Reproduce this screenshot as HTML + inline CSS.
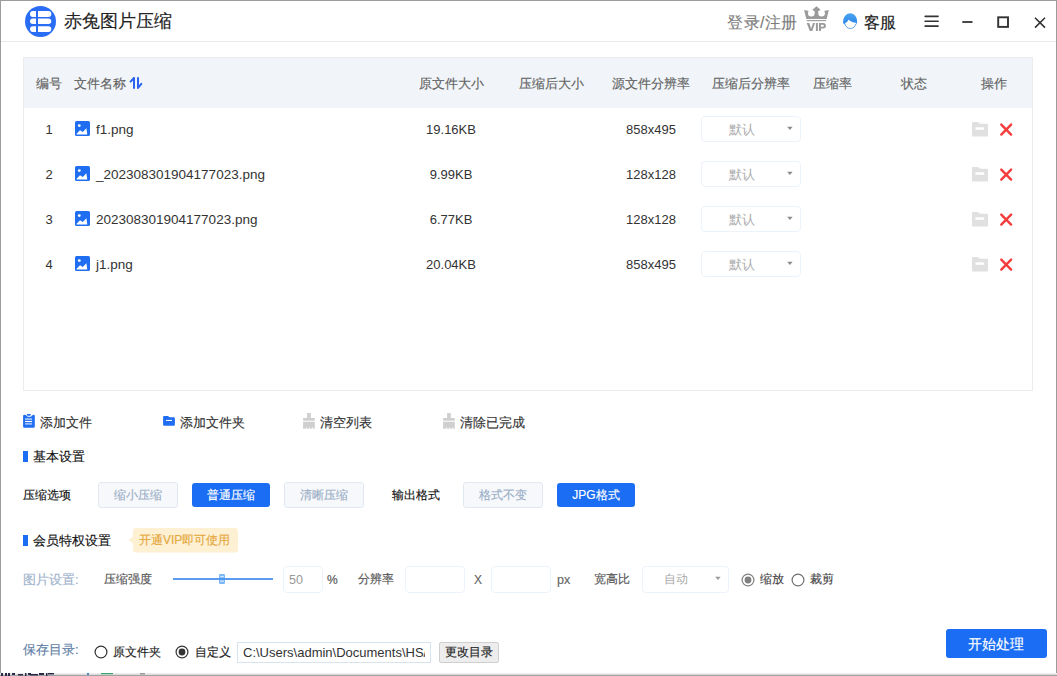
<!DOCTYPE html>
<html><head><meta charset="utf-8">
<style>
*{margin:0;padding:0;box-sizing:border-box}
html,body{width:1057px;height:676px;overflow:hidden;background:#fff}
body{position:relative;font-family:"Liberation Sans",sans-serif;color:#333}
.a{position:absolute;white-space:nowrap}
.t{position:absolute;white-space:nowrap;line-height:1;-webkit-text-stroke:0.15px currentColor}
.c{width:300px;text-align:center}
.n{-webkit-text-stroke:0}
svg.a{overflow:visible}
</style></head><body>
<div class="a" style="left:0px;top:0px;width:1057px;height:674px;border:1px solid #9c9c9c;border-bottom:none"></div>
<div class="a" style="left:0px;top:673px;width:1057px;height:1px;background:#ececec"></div>
<div class="a" style="left:0px;top:674px;width:1057px;height:1px;background:#dcdcdc"></div>
<div class="a" style="left:0px;top:675px;width:1057px;height:1px;background:#a2a2a2"></div>
<div class="a" style="left:1px;top:41px;width:1055px;height:1px;background:#e9e9e9"></div>
<svg class="a" style="left:0;top:673px" width="400" height="3" viewBox="0 0 400 3">
<g fill="#2a2a4a">
<rect x="1" y="0" width="2" height="3"/><rect x="5" y="0" width="2" height="3"/><rect x="8" y="0" width="2" height="3"/>
<rect x="12" y="0" width="3" height="2"/><rect x="18" y="1" width="5" height="1.5"/><rect x="25" y="0" width="1.5" height="3"/>
<rect x="28" y="0" width="3" height="2"/><rect x="30" y="1" width="8" height="1.5"/><rect x="39" y="0" width="5" height="2"/>
<rect x="46" y="0" width="1.5" height="3"/><rect x="48" y="0" width="6" height="1.5"/>
</g>
<rect x="101" y="0" width="12" height="1.2" fill="#3aa36a"/>
<rect x="87" y="0" width="2" height="2" fill="#4a8ac8"/>
<rect x="140" y="0" width="5" height="1.5" fill="#999"/>
</svg>
<svg class="a" style="left:25px;top:6px" width="31" height="31" viewBox="0 0 31 31">
<circle cx="15.5" cy="15.5" r="15.5" fill="#2a6df5"/>
<g fill="#fff">
<path d="M11 5.1H7.9A2.9 2.9 0 0 0 7.9 10.9H11Z"/>
<path d="M13 5.1H23.4A2.9 2.9 0 0 1 23.4 10.9H13Z"/>
<path d="M11 12.6H7.8A2.75 2.75 0 0 0 7.8 18.1H11Z"/>
<path d="M13 12.6H23.5A2.75 2.75 0 0 1 23.5 18.1H13Z"/>
<path d="M11 20.2H7.9A2.85 2.85 0 0 0 7.9 25.9H11Z"/>
<path d="M13 20.2H23.4A2.85 2.85 0 0 1 23.4 25.9H13Z"/>
</g></svg>
<div class="t" style="left:64px;top:12px;font-size:18px;color:#222;">赤兔图片压缩</div>
<div class="t" style="left:727px;top:15px;font-size:16px;color:#7d7d7d;letter-spacing:0.5px">登录/注册</div>
<svg class="a" style="left:800px;top:4px" width="32" height="30" viewBox="0 0 32 30">
<path fill="#9b9b9b" d="M4.1 6L14.9 8.2V7.7L12.1 6L16.5 2.3L20.8 6L17.9 7.7V8.2L28.8 6L26.7 14.9H6.3Z"/>
<circle cx="11.3" cy="9.2" r="3.3" fill="#fff"/>
<circle cx="21.6" cy="9.2" r="3.3" fill="#fff"/>
<rect x="6.7" y="16" width="19.4" height="1.2" fill="#a0a0a0"/>
<path fill="#9b9b9b" fill-rule="evenodd" d="M6.7 19H9.3L11.15 24.4L13 19H15L12.3 26.9H9.8Z M15.9 19H17.9V26.9H15.9Z M19 19H23.2A2.7 2.7 0 0 1 23.2 24.4H21V26.9H19Z M21 20.8H22.9A0.95 0.95 0 0 1 22.9 22.7H21Z"/>
</svg>
<svg class="a" style="left:840px;top:10px" width="20" height="22" viewBox="0 0 20 22">
<defs><linearGradient id="hg" x1="0" y1="0" x2="0" y2="1"><stop offset="0" stop-color="#4aa6f0"/><stop offset="1" stop-color="#2c84ea"/></linearGradient></defs>
<path fill="url(#hg)" d="M3.1 12.6C3.1 7.2 6 3.3 10.2 3.3C14.4 3.3 17.1 7 17.1 11.6C17.1 12.6 17 13.6 16.6 14.4L16.1 12.8C13 12.6 10 11.4 8.5 9.4C7.9 11 6.8 12.3 5.2 13L4.6 14.4C3.7 13.9 3.1 13.3 3.1 12.6Z"/>
<path fill="none" stroke="#3b8fec" stroke-width="0.8" d="M4.9 13.6C5.4 16.6 7.6 18.5 10.3 18.5C13 18.5 15.3 16.6 16 13.6"/>
</svg>
<div class="t" style="left:864px;top:15px;font-size:16px;color:#1a1a1a;">客服</div>
<svg class="a" style="left:920px;top:10px" width="130" height="22" viewBox="0 0 130 22">
<g stroke="#333" fill="none">
<path d="M5.2 6.35H18M5.2 11.24H18M5.2 16.1H18" stroke-width="1.7" stroke-linecap="round"/>
<path d="M42.3 12H52.5" stroke-width="1.8"/>
<rect x="78.2" y="7.3" width="9.8" height="9.6" stroke-width="1.9"/>
<path d="M115 7.8L125 17.6M125 7.8L115 17.6" stroke-width="1.6"/>
</g></svg>
<div class="a" style="left:23px;top:57px;width:1010px;height:334px;border:1px solid #ececec"></div>
<div class="a" style="left:24px;top:58px;width:1008px;height:50px;background:#f1f5f9"></div>
<div class="t c" style="left:-101px;top:77px;font-size:13px;color:#626262;">编号</div>
<div class="t" style="left:74px;top:77px;font-size:13px;color:#626262;">文件名称</div>
<svg class="a" style="left:126px;top:74px" width="20" height="20" viewBox="0 0 20 20">
<g stroke="#2a63f2" stroke-width="2" fill="none" stroke-linecap="round">
<path d="M8 4V14M8 4L4.6 7.6"/>
<path d="M12 4V14M12 14L15.3 9.8"/>
</g></svg>
<div class="t c" style="left:301px;top:77px;font-size:13px;color:#626262;">原文件大小</div>
<div class="t c" style="left:401px;top:77px;font-size:13px;color:#626262;">压缩后大小</div>
<div class="t c" style="left:501px;top:77px;font-size:13px;color:#626262;">源文件分辨率</div>
<div class="t c" style="left:601px;top:77px;font-size:13px;color:#626262;">压缩后分辨率</div>
<div class="t c" style="left:682px;top:77px;font-size:13px;color:#626262;">压缩率</div>
<div class="t c" style="left:764px;top:77px;font-size:13px;color:#626262;">状态</div>
<div class="t c" style="left:844px;top:77px;font-size:13px;color:#626262;">操作</div>
<div class="t c" style="left:-101px;top:123px;font-size:13px;color:#333;-webkit-text-stroke:0">1</div>
<svg class="a" style="left:75px;top:121px" width="15" height="15" viewBox="0 0 15 15">
<rect x="0" y="0" width="15" height="15" rx="1.6" fill="#1f6ef2"/>
<circle cx="4.3" cy="4.6" r="1.4" fill="#fff"/>
<path d="M1.6 12.8L5 9.2L7.8 11L11.4 7.3L12.3 13.4H1.6Z" fill="#fff"/>
</svg>
<div class="t" style="left:96px;top:122.5px;font-size:13.5px;color:#333;-webkit-text-stroke:0">f1.png</div>
<div class="t c" style="left:301px;top:123px;font-size:13px;color:#333;-webkit-text-stroke:0">19.16KB</div>
<div class="t c" style="left:501px;top:123px;font-size:13px;color:#333;-webkit-text-stroke:0">858x495</div>
<div class="a" style="left:701px;top:116px;width:100px;height:26px;border:1px solid #edf3fa;border-radius:4px;background:#fff"></div>
<div class="t c" style="left:592px;top:123px;font-size:13px;color:#ababab;-webkit-text-stroke:0">默认</div>
<svg class="a" style="left:786px;top:126px" width="8" height="5" viewBox="0 0 8 5"><path d="M1.2 0.8H6.6L3.9 3.9Z" fill="#8a8a8a"/></svg>
<svg class="a" style="left:972px;top:121px" width="17" height="16" viewBox="0 0 17 16">
<path d="M0 2A1 1 0 0 1 1 1H6L8 2.8H15A1 1 0 0 1 16 3.8V14.5A1 1 0 0 1 15 15.5H1A1 1 0 0 1 0 14.5Z" fill="#e0e0e0"/>
<rect x="3.5" y="6.3" width="8.7" height="2.5" fill="#fff"/>
</svg>
<svg class="a" style="left:998px;top:121px" width="16" height="16" viewBox="0 0 16 16">
<path d="M3.3 3.6L13.1 13.6M13.1 3.6L3.3 13.6" stroke="#f53c3c" stroke-width="2.4" stroke-linecap="round"/>
</svg>
<div class="t c" style="left:-101px;top:168px;font-size:13px;color:#333;-webkit-text-stroke:0">2</div>
<svg class="a" style="left:75px;top:166px" width="15" height="15" viewBox="0 0 15 15">
<rect x="0" y="0" width="15" height="15" rx="1.6" fill="#1f6ef2"/>
<circle cx="4.3" cy="4.6" r="1.4" fill="#fff"/>
<path d="M1.6 12.8L5 9.2L7.8 11L11.4 7.3L12.3 13.4H1.6Z" fill="#fff"/>
</svg>
<div class="t" style="left:96px;top:167.5px;font-size:13.5px;color:#333;-webkit-text-stroke:0">_202308301904177023.png</div>
<div class="t c" style="left:301px;top:168px;font-size:13px;color:#333;-webkit-text-stroke:0">9.99KB</div>
<div class="t c" style="left:501px;top:168px;font-size:13px;color:#333;-webkit-text-stroke:0">128x128</div>
<div class="a" style="left:701px;top:161px;width:100px;height:26px;border:1px solid #edf3fa;border-radius:4px;background:#fff"></div>
<div class="t c" style="left:592px;top:168px;font-size:13px;color:#ababab;-webkit-text-stroke:0">默认</div>
<svg class="a" style="left:786px;top:171px" width="8" height="5" viewBox="0 0 8 5"><path d="M1.2 0.8H6.6L3.9 3.9Z" fill="#8a8a8a"/></svg>
<svg class="a" style="left:972px;top:166px" width="17" height="16" viewBox="0 0 17 16">
<path d="M0 2A1 1 0 0 1 1 1H6L8 2.8H15A1 1 0 0 1 16 3.8V14.5A1 1 0 0 1 15 15.5H1A1 1 0 0 1 0 14.5Z" fill="#e0e0e0"/>
<rect x="3.5" y="6.3" width="8.7" height="2.5" fill="#fff"/>
</svg>
<svg class="a" style="left:998px;top:166px" width="16" height="16" viewBox="0 0 16 16">
<path d="M3.3 3.6L13.1 13.6M13.1 3.6L3.3 13.6" stroke="#f53c3c" stroke-width="2.4" stroke-linecap="round"/>
</svg>
<div class="t c" style="left:-101px;top:213px;font-size:13px;color:#333;-webkit-text-stroke:0">3</div>
<svg class="a" style="left:75px;top:211px" width="15" height="15" viewBox="0 0 15 15">
<rect x="0" y="0" width="15" height="15" rx="1.6" fill="#1f6ef2"/>
<circle cx="4.3" cy="4.6" r="1.4" fill="#fff"/>
<path d="M1.6 12.8L5 9.2L7.8 11L11.4 7.3L12.3 13.4H1.6Z" fill="#fff"/>
</svg>
<div class="t" style="left:96px;top:212.5px;font-size:13.5px;color:#333;-webkit-text-stroke:0">202308301904177023.png</div>
<div class="t c" style="left:301px;top:213px;font-size:13px;color:#333;-webkit-text-stroke:0">6.77KB</div>
<div class="t c" style="left:501px;top:213px;font-size:13px;color:#333;-webkit-text-stroke:0">128x128</div>
<div class="a" style="left:701px;top:206px;width:100px;height:26px;border:1px solid #edf3fa;border-radius:4px;background:#fff"></div>
<div class="t c" style="left:592px;top:213px;font-size:13px;color:#ababab;-webkit-text-stroke:0">默认</div>
<svg class="a" style="left:786px;top:216px" width="8" height="5" viewBox="0 0 8 5"><path d="M1.2 0.8H6.6L3.9 3.9Z" fill="#8a8a8a"/></svg>
<svg class="a" style="left:972px;top:211px" width="17" height="16" viewBox="0 0 17 16">
<path d="M0 2A1 1 0 0 1 1 1H6L8 2.8H15A1 1 0 0 1 16 3.8V14.5A1 1 0 0 1 15 15.5H1A1 1 0 0 1 0 14.5Z" fill="#e0e0e0"/>
<rect x="3.5" y="6.3" width="8.7" height="2.5" fill="#fff"/>
</svg>
<svg class="a" style="left:998px;top:211px" width="16" height="16" viewBox="0 0 16 16">
<path d="M3.3 3.6L13.1 13.6M13.1 3.6L3.3 13.6" stroke="#f53c3c" stroke-width="2.4" stroke-linecap="round"/>
</svg>
<div class="t c" style="left:-101px;top:258px;font-size:13px;color:#333;-webkit-text-stroke:0">4</div>
<svg class="a" style="left:75px;top:256px" width="15" height="15" viewBox="0 0 15 15">
<rect x="0" y="0" width="15" height="15" rx="1.6" fill="#1f6ef2"/>
<circle cx="4.3" cy="4.6" r="1.4" fill="#fff"/>
<path d="M1.6 12.8L5 9.2L7.8 11L11.4 7.3L12.3 13.4H1.6Z" fill="#fff"/>
</svg>
<div class="t" style="left:96px;top:257.5px;font-size:13.5px;color:#333;-webkit-text-stroke:0">j1.png</div>
<div class="t c" style="left:301px;top:258px;font-size:13px;color:#333;-webkit-text-stroke:0">20.04KB</div>
<div class="t c" style="left:501px;top:258px;font-size:13px;color:#333;-webkit-text-stroke:0">858x495</div>
<div class="a" style="left:701px;top:251px;width:100px;height:26px;border:1px solid #edf3fa;border-radius:4px;background:#fff"></div>
<div class="t c" style="left:592px;top:258px;font-size:13px;color:#ababab;-webkit-text-stroke:0">默认</div>
<svg class="a" style="left:786px;top:261px" width="8" height="5" viewBox="0 0 8 5"><path d="M1.2 0.8H6.6L3.9 3.9Z" fill="#8a8a8a"/></svg>
<svg class="a" style="left:972px;top:256px" width="17" height="16" viewBox="0 0 17 16">
<path d="M0 2A1 1 0 0 1 1 1H6L8 2.8H15A1 1 0 0 1 16 3.8V14.5A1 1 0 0 1 15 15.5H1A1 1 0 0 1 0 14.5Z" fill="#e0e0e0"/>
<rect x="3.5" y="6.3" width="8.7" height="2.5" fill="#fff"/>
</svg>
<svg class="a" style="left:998px;top:256px" width="16" height="16" viewBox="0 0 16 16">
<path d="M3.3 3.6L13.1 13.6M13.1 3.6L3.3 13.6" stroke="#f53c3c" stroke-width="2.4" stroke-linecap="round"/>
</svg>
<svg class="a" style="left:20px;top:410px" width="20" height="20" viewBox="0 0 20 20">
<path d="M3.1 6A1.2 1.2 0 0 1 4.3 4.8L6.2 5.2L7.6 6.8H10.8L12.4 5.2L13.6 4.8A1.2 1.2 0 0 1 14.8 6V16.6A1.2 1.2 0 0 1 13.6 17.8H4.3A1.2 1.2 0 0 1 3.1 16.6Z" fill="#1f6ef2"/>
<path d="M6.8 4H10.9L10.3 5.8H7.4Z" fill="#1f6ef2"/>
<rect x="5" y="8.3" width="7.1" height="1.5" fill="#b8d0fb"/>
<rect x="5" y="10.9" width="7.1" height="1.2" fill="#fff"/>
<rect x="5" y="13.2" width="7.1" height="1.4" fill="#b8d0fb"/>
</svg>
<div class="t" style="left:40px;top:416px;font-size:13px;color:#333;">添加文件</div>
<svg class="a" style="left:160px;top:410px" width="20" height="20" viewBox="0 0 20 20">
<path d="M3.1 7A1.1 1.1 0 0 1 4.2 5.9H8L9.6 7.3H13.8A1.1 1.1 0 0 1 14.9 8.4V14.7A1.1 1.1 0 0 1 13.8 15.8H4.2A1.1 1.1 0 0 1 3.1 14.7Z" fill="#1f6ef2"/>
<rect x="6" y="9.9" width="6" height="1.1" fill="#fff"/>
</svg>
<div class="t" style="left:180px;top:416px;font-size:13px;color:#333;">添加文件夹</div>
<svg class="a" style="left:300px;top:410px" width="20" height="20" viewBox="0 0 20 20">
<g fill="#cfcfcf">
<rect x="7.1" y="3" width="3.7" height="5.2"/>
<rect x="3.1" y="8" width="11.7" height="2.7"/>
<path d="M3.1 11.8H14.8V18.8H13.3L12.7 16.6L12.1 18.8H10.4L9.9 16.6L9.4 18.8H6.9L6.4 16.6L5.9 18.8H3.1Z"/>
</g></svg>
<div class="t" style="left:320px;top:416px;font-size:13px;color:#333;">清空列表</div>
<svg class="a" style="left:440px;top:410px" width="20" height="20" viewBox="0 0 20 20">
<g fill="#cfcfcf">
<rect x="7.1" y="3" width="3.7" height="5.2"/>
<rect x="3.1" y="8" width="11.7" height="2.7"/>
<path d="M3.1 11.8H14.8V18.8H13.3L12.7 16.6L12.1 18.8H10.4L9.9 16.6L9.4 18.8H6.9L6.4 16.6L5.9 18.8H3.1Z"/>
</g></svg>
<div class="t" style="left:460px;top:416px;font-size:13px;color:#333;">清除已完成</div>
<div class="a" style="left:23px;top:451px;width:4.5px;height:11px;background:#1b6ef3"></div>
<div class="t" style="left:33px;top:450px;font-size:13px;color:#111;">基本设置</div>
<div class="t" style="left:23px;top:489px;font-size:12px;color:#111;">压缩选项</div>
<div class="a" style="left:98px;top:482px;width:80px;height:26px;background:#f6f8fb;border:1px solid #e1e8f1;border-radius:3px"></div>
<div class="t c" style="left:-12.0px;top:489px;font-size:12px;color:#9aaec6;">缩小压缩</div>
<div class="a" style="left:192px;top:483px;width:78px;height:24px;background:#1b6ef3;border-radius:3px"></div>
<div class="t c" style="left:81.0px;top:489px;font-size:12px;color:#fff;">普通压缩</div>
<div class="a" style="left:284px;top:482px;width:80px;height:26px;background:#f6f8fb;border:1px solid #e1e8f1;border-radius:3px"></div>
<div class="t c" style="left:174.0px;top:489px;font-size:12px;color:#9aaec6;">清晰压缩</div>
<div class="t" style="left:392px;top:489px;font-size:12px;color:#111;">输出格式</div>
<div class="a" style="left:463px;top:482px;width:80px;height:26px;background:#f6f8fb;border:1px solid #e1e8f1;border-radius:3px"></div>
<div class="t c" style="left:353.0px;top:489px;font-size:12px;color:#9aaec6;">格式不变</div>
<div class="a" style="left:557px;top:483px;width:78px;height:24px;background:#1b6ef3;border-radius:3px"></div>
<div class="t c" style="left:446.0px;top:489px;font-size:12px;color:#fff;">JPG格式</div>
<div class="a" style="left:23px;top:535px;width:4.5px;height:10.5px;background:#1b6ef3"></div>
<div class="t" style="left:33px;top:534px;font-size:13px;color:#111;">会员特权设置</div>
<svg class="a" style="left:128px;top:528px" width="111" height="25" viewBox="0 0 111 25">
<path d="M8 0H107A3 3 0 0 1 110 3V21.5A3 3 0 0 1 107 24.5H8A3 3 0 0 1 5 21.5V15.5L0.5 12L5 8.5V3A3 3 0 0 1 8 0Z" fill="#fdf0d3"/>
</svg>
<div class="t" style="left:139px;top:534px;font-size:12px;color:#e6a83e;">开通VIP即可使用</div>
<div class="t" style="left:23px;top:573px;font-size:13px;color:#a0b3cb;">图片设置:</div>
<div class="t" style="left:104px;top:573px;font-size:12px;color:#555;">压缩强度</div>
<div class="a" style="left:173px;top:578px;width:100px;height:2px;background:#5b9cf2"></div>
<svg class="a" style="left:219px;top:574px" width="6" height="10" viewBox="0 0 6 10">
<rect x="0" y="0" width="6" height="10" rx="1.2" fill="#7cb8f7"/>
<rect x="1.2" y="2" width="3.6" height="1.2" fill="#d6e9fd"/>
<rect x="1.2" y="6.5" width="3.6" height="1.2" fill="#d6e9fd"/>
<rect x="0" y="4" width="6" height="2" fill="#4d98f2"/>
</svg>
<div class="a" style="left:283px;top:566px;width:40px;height:27px;border:1px solid #edf3fa;border-radius:4px"></div>
<div class="t" style="left:289px;top:574px;font-size:12.5px;color:#999;-webkit-text-stroke:0">50</div>
<div class="t" style="left:327px;top:574px;font-size:12px;color:#555;">%</div>
<div class="t" style="left:358px;top:573px;font-size:12px;color:#555;">分辨率</div>
<div class="a" style="left:405px;top:566px;width:60px;height:27px;border:1px solid #edf3fa;border-radius:4px"></div>
<div class="t" style="left:474px;top:574px;font-size:12px;color:#666;">X</div>
<div class="a" style="left:491px;top:566px;width:60px;height:27px;border:1px solid #edf3fa;border-radius:4px"></div>
<div class="t" style="left:557px;top:574px;font-size:12.5px;color:#666;">px</div>
<div class="t" style="left:594px;top:573px;font-size:12px;color:#555;">宽高比</div>
<div class="a" style="left:642px;top:566px;width:87px;height:27px;border:1px solid #edf3fa;border-radius:4px"></div>
<div class="t" style="left:664px;top:573px;font-size:12px;color:#aaa;-webkit-text-stroke:0">自动</div>
<svg class="a" style="left:714px;top:576px" width="8" height="5" viewBox="0 0 8 5"><path d="M1.2 0.8H6.6L3.9 3.9Z" fill="#999"/></svg>
<svg class="a" style="left:739.5px;top:571.5px" width="16" height="16" viewBox="0 0 16 16">
<circle cx="8" cy="8" r="5.9" fill="#fff" stroke="#808080" stroke-width="1.2"/><circle cx="8" cy="8" r="3.4" fill="#808080"/></svg>
<div class="t" style="left:760px;top:573px;font-size:12px;color:#444;">缩放</div>
<svg class="a" style="left:789.5px;top:571.5px" width="16" height="16" viewBox="0 0 16 16">
<circle cx="8" cy="8" r="5.9" fill="#fff" stroke="#707070" stroke-width="1.2"/></svg>
<div class="t" style="left:810px;top:573px;font-size:12px;color:#444;">裁剪</div>
<div class="t" style="left:23px;top:643px;font-size:13px;color:#6280a6;">保存目录:</div>
<svg class="a" style="left:92.5px;top:643.5px" width="16" height="16" viewBox="0 0 16 16">
<circle cx="8" cy="8" r="5.9" fill="#fff" stroke="#333" stroke-width="1.2"/></svg>
<div class="t" style="left:113px;top:646px;font-size:12px;color:#222;">原文件夹</div>
<svg class="a" style="left:173.5px;top:643.5px" width="16" height="16" viewBox="0 0 16 16">
<circle cx="8" cy="8" r="5.9" fill="#fff" stroke="#333" stroke-width="1.2"/><circle cx="8" cy="8" r="3.4" fill="#333"/></svg>
<div class="t" style="left:195px;top:646px;font-size:12px;color:#222;">自定义</div>
<div class="a" style="left:237px;top:642px;width:194px;height:21px;border:1px solid #d7e3ef;background:#fff"></div>
<div class="t" style="left:243px;top:646px;font-size:13px;color:#333;overflow:hidden;width:182px;-webkit-text-stroke:0">C:\Users\admin\Documents\HS/</div>
<div class="a" style="left:439px;top:642px;width:60px;height:21px;border:1px solid #cfcfcf;background:#ededed;border-radius:2px"></div>
<div class="t" style="left:445px;top:646px;font-size:12px;color:#222;">更改目录</div>
<div class="a" style="left:946px;top:629px;width:101px;height:29px;background:#1b6ef3;border-radius:3px"></div>
<div class="t" style="left:968px;top:637px;font-size:14px;color:#fff;">开始处理</div>
</body></html>
